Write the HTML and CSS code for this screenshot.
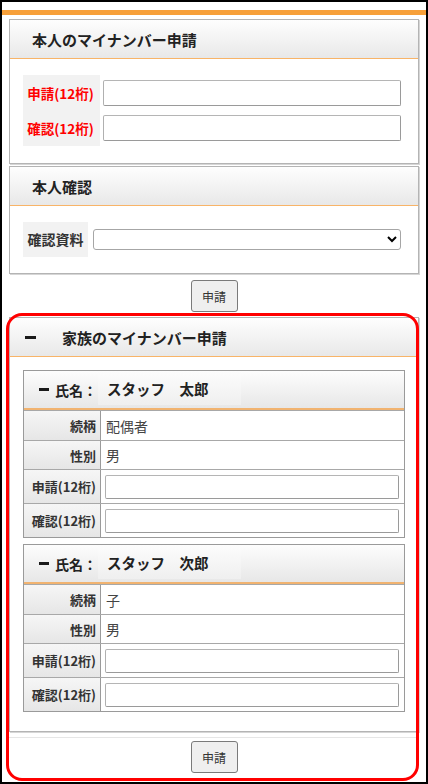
FILE: index.html
```html
<!DOCTYPE html>
<html lang="ja">
<head>
<meta charset="utf-8">
<title>マイナンバー申請</title>
<link rel="stylesheet" href="styles.css">
</head>
<body>
<div class="frame">
  <div class="bar"></div>

  <section class="panel">
    <div class="panel-head"><h2 class="panel-title">本人のマイナンバー申請</h2></div>
    <div class="panel-body">
      <div class="pair-form">
        <div class="pair-labels">
          <span class="req">申請(12桁)</span>
          <span class="req">確認(12桁)</span>
        </div>
        <div class="pair-fields">
          <input class="text-in" type="text">
          <input class="text-in" type="text">
        </div>
      </div>
    </div>
  </section>

  <section class="panel panel-second">
    <div class="panel-head"><h2 class="panel-title">本人確認</h2></div>
    <div class="panel-body panel-body-select">
      <div class="select-form">
        <div class="select-label">確認資料</div>
        <select class="select-in"><option></option></select>
      </div>
    </div>
  </section>

  <div class="btn-row"><button class="btn" type="button">申請</button></div>

  <section class="panel panel-family">
    <div class="panel-head panel-head-toggle"><span class="minus"></span><h2 class="panel-title">家族のマイナンバー申請</h2></div>
    <div class="panel-body panel-body-family">
      <div class="member">
        <div class="member-head"><span class="minus minus-sm"></span><span class="member-key">氏名：</span><span class="member-name">スタッフ　太郎</span></div>
        <div class="mrow"><div class="mlabel">続柄</div><div class="mval">配偶者</div></div>
        <div class="mrow"><div class="mlabel">性別</div><div class="mval">男</div></div>
        <div class="mrow mrow-in"><div class="mlabel">申請(12桁)</div><div class="mval"><input class="text-in row-in" type="text"></div></div>
        <div class="mrow mrow-in"><div class="mlabel">確認(12桁)</div><div class="mval"><input class="text-in row-in" type="text"></div></div>
      </div>
      <div class="member">
        <div class="member-head"><span class="minus minus-sm"></span><span class="member-key">氏名：</span><span class="member-name">スタッフ　次郎</span></div>
        <div class="mrow"><div class="mlabel">続柄</div><div class="mval">子</div></div>
        <div class="mrow"><div class="mlabel">性別</div><div class="mval">男</div></div>
        <div class="mrow mrow-in"><div class="mlabel">申請(12桁)</div><div class="mval"><input class="text-in row-in" type="text"></div></div>
        <div class="mrow mrow-in"><div class="mlabel">確認(12桁)</div><div class="mval"><input class="text-in row-in" type="text"></div></div>
      </div>
    </div>
  </section>

  <div class="footer-row"><button class="btn" type="button">申請</button></div>

  <div class="highlight"></div>
</div>
</body>
</html>
```

FILE: styles.css
```css
* { box-sizing: border-box; }
html, body { margin: 0; padding: 0; background: #fff; }
body {
  font-family: "Noto Sans CJK JP", "Noto Sans", sans-serif;
  color: #222;
}
.frame {
  position: relative;
  width: 428px;
  height: 784px;
  border: 2px solid #000;
  padding-top: 8px;
  overflow: hidden;
  background: #fff;
}
.bar {
  height: 5px;
  background: #f7a03a;
  margin-bottom: 4px;
}
.panel {
  margin: 0 7px;
  border: 1px solid #b4b4b4;
  box-shadow: 1px 1px 0 #d6d6d6;
  background: #fff;
}
.panel-second { margin-top: 2px; }
.panel-family { margin-top: 5px; }
.panel-head {
  height: 39px;
  border-bottom: 1px solid #f8b468;
  background: linear-gradient(#fefefe, #e8e8e8);
  display: flex;
  align-items: center;
  padding-left: 22px;
}
.panel-head-toggle { padding-left: 15px; }
.panel-title {
  margin: 0;
  font-size: 15px;
  font-weight: bold;
  color: #222;
  line-height: 1;
}
.minus {
  display: inline-block;
  flex-shrink: 0;
  width: 11px;
  height: 3px;
  background: #1a1a1a;
  margin-right: 26px;
}
.minus-sm { width: 10px; margin-right: 6px; }

.panel-body { padding: 16px 17px 17px 13px; }
.pair-form { display: flex; gap: 3px; }
.pair-labels {
  width: 77px;
  background: #f2f2f2;
  padding: 5px 0;
  display: flex;
  flex-direction: column;
  gap: 9px;
}
.pair-labels .req {
  height: 26px;
  line-height: 26px;
  text-align: center;
  color: #f00;
  font-weight: bold;
  font-size: 13.5px;
  padding-right: 2px;
}
.pair-fields {
  flex: 1;
  padding: 5px 0;
  display: flex;
  flex-direction: column;
  gap: 9px;
}
.text-in {
  display: block;
  width: 100%;
  height: 26px;
  border: 1px solid #9a9a9a;
  border-top-color: #b5b5b5;
  border-left-color: #b0b0b0;
  border-radius: 2px;
  background: #fff;
  margin: 0;
  padding: 0 4px;
  font: inherit;
}
.panel-body-select { padding-bottom: 16px; }
.select-form { display: flex; align-items: center; gap: 5px; }
.select-label {
  width: 65px;
  height: 35px;
  line-height: 35px;
  background: #f2f2f2;
  text-align: center;
  font-size: 14px;
  font-weight: bold;
  color: #333;
}
.select-in {
  flex: 1;
  height: 21px;
  border: 1px solid #a6a6a6;
  border-radius: 3px;
  background: #fff;
  font: 13px "Noto Sans CJK JP", sans-serif;
  margin: 0;
}
.btn-row { display: flex; justify-content: center; margin-top: 6px; }
.btn {
  width: 47px;
  height: 32px;
  border: 1px solid #7a7a7a;
  border-radius: 3px;
  background: #efefef;
  font: 12px "Noto Sans CJK JP", sans-serif;
  color: #333;
  padding: 0;
  margin: 0;
}
.panel-body-family {
  padding: 13px 13px 19px 13px;
  display: flex;
  flex-direction: column;
  gap: 6px;
}
.member {
  border: 1px solid #9a9a9a;
}
.member-head {
  height: 39px;
  border-bottom: 2px solid #f1b370;
  background: linear-gradient(#fdfdfd, #e7e7e7);
  display: flex;
  align-items: center;
  padding-left: 15px;
  font-size: 14px;
  font-weight: bold;
  color: #222;
  white-space: nowrap;
}
.member-key { width: 43px; flex-shrink: 0; white-space: nowrap; }
.member-name {
  align-self: stretch;
  flex-shrink: 0;
  margin: 1px 0 3px;
  width: 143px;
  padding-left: 9px;
  display: flex;
  align-items: center;
  font-size: 14.5px;
  background: linear-gradient(#fcfcfc, #efefef);
}
.mrow {
  display: flex;
  border-top: 1px solid #a8a8a8;
  height: 29px;
}
.member .mrow:nth-child(2) { height: 30px; }
.mrow-in { height: 34px; }
.mlabel {
  width: 77px;
  border-right: 1px solid #9a9a9a;
  background: linear-gradient(#f6f6f6, #e6e6e6);
  text-align: right;
  padding-right: 4px;
  font-size: 13px;
  font-weight: bold;
  color: #333;
  display: flex;
  align-items: center;
  justify-content: flex-end;
  white-space: nowrap;
}
.mval {
  flex: 1;
  display: flex;
  align-items: center;
  padding: 0 4px 0 5px;
  font-size: 14px;
  color: #444;
}
.row-in { height: 24px; margin-left: -1px; }
.footer-row {
  margin: 5px 7px 0;
  border-top: 1px solid #e6e6e6;
  padding-top: 3px;
  display: flex;
  justify-content: center;
}
.highlight {
  position: absolute;
  left: 4px;
  top: 311px;
  width: 413px;
  height: 468px;
  border: 3px solid #ff0000;
  border-radius: 16px;
  pointer-events: none;
}
```
